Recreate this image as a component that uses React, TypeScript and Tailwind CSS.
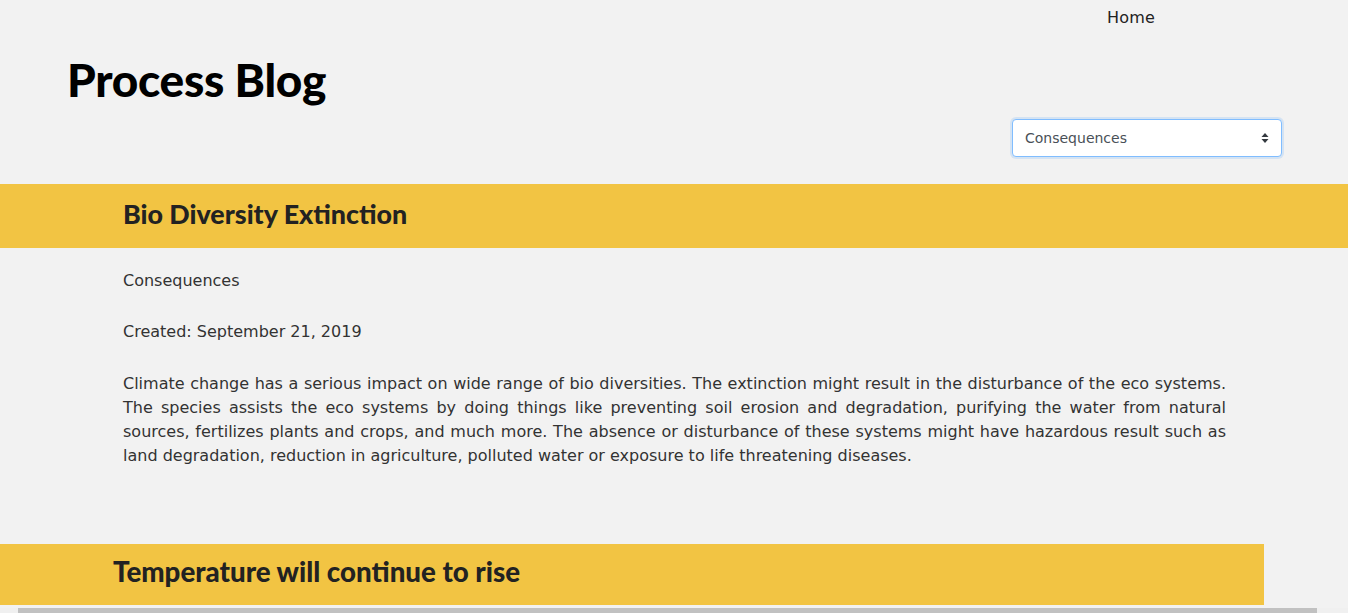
import React from 'react';

const posts = [
  {
    title: 'Bio Diversity Extinction',
    category: 'Consequences',
    created: 'September 21, 2019',
    body: 'Climate change has a serious impact on wide range of bio diversities. The extinction might result in the disturbance of the eco systems. The species assists the eco systems by doing things like preventing soil erosion and degradation, purifying the water from natural sources, fertilizes plants and crops, and much more. The absence or disturbance of these systems might have hazardous result such as land degradation, reduction in agriculture, polluted water or exposure to life threatening diseases.',
  },
];

const heading = "font-['Lato',sans-serif] font-black";
const body = "font-['DejaVu_Sans',sans-serif]";

export default function App() {
  return (
    <div className="min-h-screen bg-[#f2f2f2] overflow-hidden text-[#222]">
      {/* nav */}
      <nav className="flex justify-end pr-[193px] pt-[6px] h-[40px]">
        <a className={`${body} text-[16px] text-[#222] tracking-[0.2px]`}>Home</a>
      </nav>

      {/* header */}
      <header className="pl-[67px] pr-[66px] pt-[12px] flex flex-col">
        <h1 className={`${heading} text-[46px] leading-[56px] text-black tracking-[-0.3px]`}>Process Blog</h1>
        <div className="flex justify-end pt-[11px]">
          <div className="w-[270px] h-[38px] bg-white border border-[#80bdff] rounded-[4px] shadow-[0_0_0_2px_rgba(0,123,255,0.12)] flex items-center justify-between pl-[12px] pr-[12px]">
            <span className={`${body} text-[14px] text-[#495057]`}>Consequences</span>
            <svg width="8" height="12" viewBox="0 0 8 12">
              <path d="M4 1 L7.5 5 L0.5 5 Z" fill="#343a40" />
              <path d="M4 11 L7.5 7 L0.5 7 Z" fill="#343a40" />
            </svg>
          </div>
        </div>
      </header>

      {posts.map((p) => (
        <section key={p.title} className="mt-[27px]">
          <div className="bg-[#f2c443] h-[64px] flex items-center pl-[123px] pb-[3px]">
            <h2 className={`${heading} text-[26.8px] text-[#222]`}>{p.title}</h2>
          </div>
          <div className={`${body} px-[123px] pr-[122px] pt-[21px] text-[16px] text-[#333] leading-[24px]`}>
            <p>{p.category}</p>
            <p className="mt-[27px]">Created: {p.created}</p>
            <p className="mt-[28px] text-justify">{p.body}</p>
          </div>
        </section>
      ))}

      <section className="mt-[76px] mr-[84px]">
        <div className="bg-[#f2c443] h-[61px] flex items-center pl-[113px] pb-[6px]">
          <h2 className={`${heading} text-[27.7px] text-[#222]`}>Temperature will continue to rise</h2>
        </div>
      </section>

      {/* horizontal scrollbar */}
      <div className="fixed bottom-0 left-0 right-0 h-[5px] bg-[#f0f0f0] flex px-[18px] pr-[31px]">
        <div className="flex-1 bg-[#c1c1c1]" />
      </div>
    </div>
  );
}
